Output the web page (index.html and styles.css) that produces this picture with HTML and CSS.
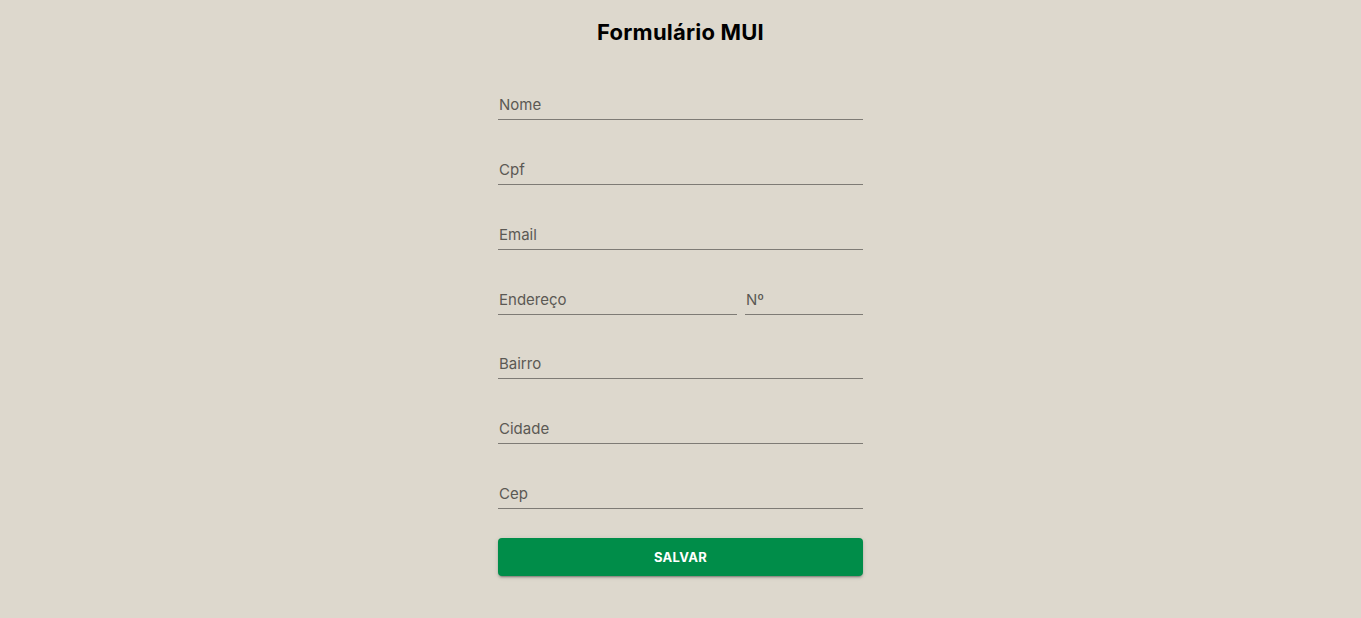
FILE: index.html
```html
<!DOCTYPE html>
<html lang="pt-BR">
<head>
<meta charset="utf-8">
<title>Formulário MUI</title>
<link rel="stylesheet" href="styles.css">
</head>
<body>
<main class="page">
  <h1 class="title">Formulário MUI</h1>
  <form class="form">
    <div class="field"><span class="label">Nome</span></div>
    <div class="field"><span class="label">Cpf</span></div>
    <div class="field"><span class="label">Email</span></div>
    <div class="row">
      <div class="field wide"><span class="label">Endereço</span></div>
      <div class="field narrow"><span class="label">Nº</span></div>
    </div>
    <div class="field"><span class="label">Bairro</span></div>
    <div class="field"><span class="label">Cidade</span></div>
    <div class="field"><span class="label">Cep</span></div>
    <button type="button" class="btn">Salvar</button>
  </form>
</main>
</body>
</html>
```

FILE: styles.css
```css
html, body {
  margin: 0;
  padding: 0;
  background: #ddd8cd;
  height: 100%;
}
body {
  font-family: "Inter", "Open Sans", sans-serif;
}
.page {
  width: 365px;
  margin: 0 auto;
}
.title {
  margin: 0;
  height: 55.2px;
  padding-top: 18px;
  box-sizing: border-box;
  text-align: center;
  font-size: 22px;
  line-height: 28px;
  font-weight: 700;
  letter-spacing: 0.2px;
  color: #000;
}
.form {
  display: flex;
  flex-direction: column;
}
.field {
  height: 63.83px;
  display: flex;
  align-items: flex-end;
  border-bottom: 1px solid #7e7b75;
  box-sizing: content-box;
}
.label {
  font-size: 15px;
  line-height: 22px;
  padding-bottom: 3px;
  padding-left: 1px;
  color: #5b5954;
}
.row {
  display: flex;
  gap: 8px;
}
.wide { width: 239px; }
.narrow { flex: 1; }
.btn {
  margin-top: 28.8px;
  height: 38px;
  border: none;
  border-radius: 4px;
  background: #008d49;
  color: #fff;
  font-family: inherit;
  font-weight: 700;
  font-size: 13px;
  text-transform: uppercase;
  letter-spacing: 0.3px;
  box-shadow: 0 3px 1px -2px rgba(0,0,0,0.2), 0 2px 2px 0 rgba(0,0,0,0.14), 0 1px 5px 0 rgba(0,0,0,0.12);
}
```
